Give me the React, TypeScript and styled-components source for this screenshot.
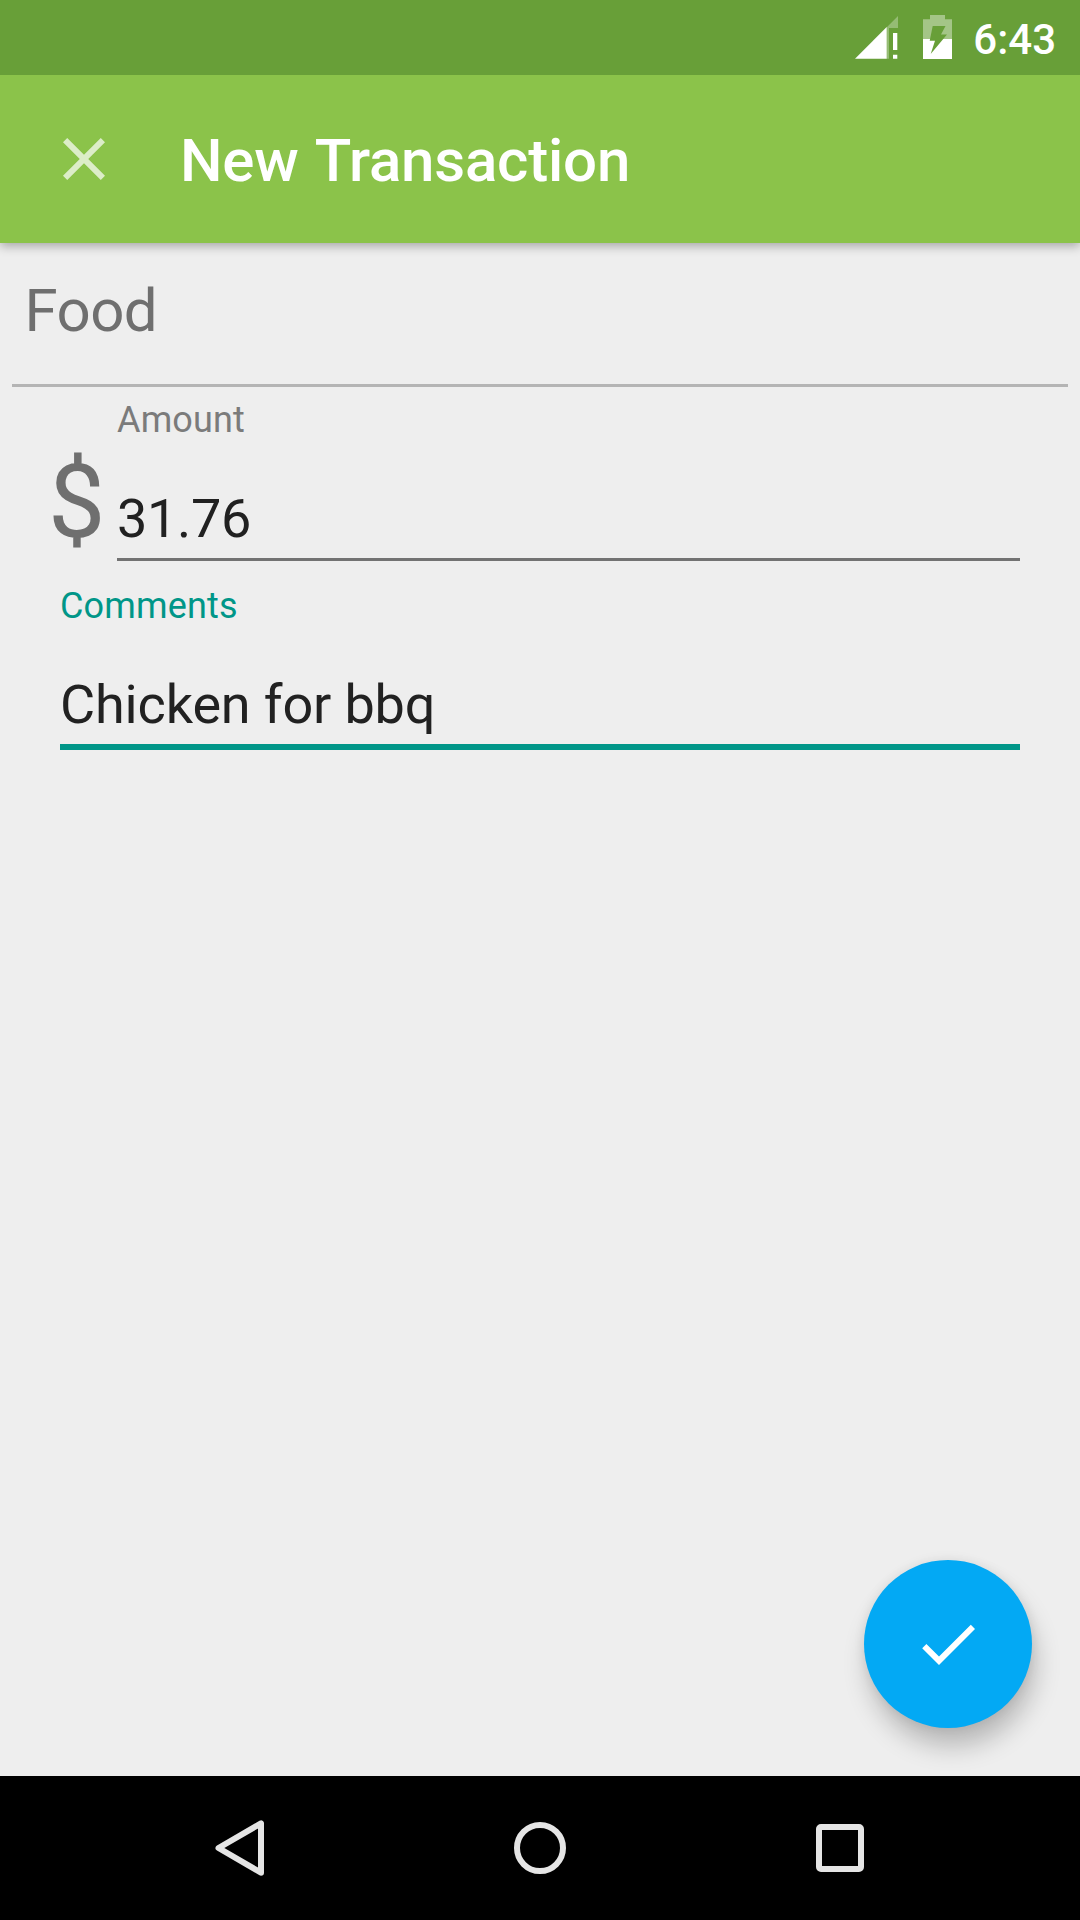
import React, { useState } from "react";
import styled, { createGlobalStyle } from "styled-components";

const GlobalStyle = createGlobalStyle`
  *, *::before, *::after { box-sizing: border-box; }
  body {
    margin: 0;
    background: #eeeeee;
    font-family: Roboto, "Noto Sans", sans-serif;
  }
`;

const Screen = styled.div`
  position: relative;
  display: flex;
  flex-direction: column;
  width: 1080px;
  height: 1920px;
  overflow: hidden;
  background: #eeeeee;
`;

const StatusBar = styled.div`
  position: relative;
  z-index: 1;
  display: flex;
  justify-content: flex-end;
  align-items: center;
  height: 75px;
  padding-right: 24px;
  background: #689f38;
`;

const SignalIcon = styled.svg`
  width: 44px;
  height: 44px;
  margin: 0 24px 1px 0;
`;

const BatteryIcon = styled.svg`
  width: 29px;
  height: 44px;
  margin: 0 21px 1px 0;
`;

const Clock = styled.span`
  padding-top: 4px;
  color: #ffffff;
  font-size: 42px;
  font-weight: 500;
  line-height: 50px;
`;

const AppBar = styled.header`
  position: relative;
  display: flex;
  align-items: center;
  height: 168px;
  padding-left: 48px;
  background: #8bc34a;
  box-shadow: 0 3px 10px rgba(0, 0, 0, 0.31);
`;

const CloseButton = styled.button`
  display: flex;
  width: 72px;
  height: 72px;
  margin-right: 60px;
  padding: 0;
  border: 0;
  background: none;
`;

const Title = styled.h1`
  margin: 0;
  padding-top: 4px;
  color: #ffffff;
  font-size: 60px;
  font-weight: 500;
  line-height: 70px;
  letter-spacing: -0.2px;
  word-spacing: 2.7px;
`;

const Form = styled.main`
  flex: 1;
  display: flex;
  flex-direction: column;
`;

const Category = styled.div`
  height: 144px;
  margin: 0 12px;
  padding: 32px 12.5px 0;
  border-bottom: 3px solid #b4b4b4;
  color: #6f6f6f;
  font-size: 60px;
  line-height: 71px;
  letter-spacing: -0.55px;
`;

const AmountRow = styled.div`
  display: flex;
  padding: 0 60px 0 48px;
`;

const Currency = styled.span`
  width: 69px;
  padding-top: 55px;
  color: #6f6f6f;
  font-size: 102px;
  line-height: 120px;
`;

const Field = styled.label<{ $focused?: boolean }>`
  flex: 1;
  display: flex;
  flex-direction: column;
  height: 174px;
  padding-top: 12px;
  border-bottom: ${(p) => (p.$focused ? "6px solid #009688" : "3px solid #727272")};
`;

const Comments = styled.div`
  display: flex;
  padding: 0 60px;

  ${Field} {
    height: 188px;
    padding-top: 23px;
  }
`;

const FieldLabel = styled.span<{ $focused?: boolean }>`
  color: ${(p) => (p.$focused ? "#009688" : "#7b7b7b")};
  font-size: 36px;
  line-height: 42px;
  letter-spacing: 0.15px;
`;

const FieldInput = styled.input<{ $tracking: number }>`
  width: 100%;
  height: 64px;
  margin-top: 46px;
  padding: 0;
  border: 0;
  outline: 0;
  background: none;
  color: #212121;
  font-family: inherit;
  font-size: 54px;
  line-height: 64px;
  letter-spacing: ${(p) => p.$tracking}px;
`;

const Fab = styled.button`
  position: absolute;
  right: 48px;
  bottom: 192px;
  display: flex;
  align-items: center;
  justify-content: center;
  width: 168px;
  height: 168px;
  padding: 0;
  border: 0;
  border-radius: 50%;
  background: #03a9f4;
  box-shadow: 4px 19px 26px -1px rgba(0, 0, 0, 0.23), 0 0 12px rgba(0, 0, 0, 0.08);
`;

const NavBar = styled.nav`
  position: relative;
  display: flex;
  justify-content: center;
  align-items: center;
  gap: 200px;
  height: 144px;
  background: #000000;
`;

const NavIcon = styled.svg`
  width: 100px;
  height: 100px;
`;

export default function App() {
  const [amount, setAmount] = useState("31.76");
  const [comments, setComments] = useState("Chicken for bbq");

  return (
    <>
      <GlobalStyle />
      <Screen>
        <StatusBar>
          <SignalIcon viewBox="0 0 44 44">
            <path d="M43 1V13H34V43.8H31.5V12.5Z" fill="#fff" fillOpacity="0.3" />
            <path d="M0 43.8L31.7 12V43.8Z" fill="#fff" />
            <path d="M38 18h4.3v17h-4.3zM38 39.7h4.3v4.1h-4.3z" fill="#fff" />
          </SignalIcon>
          <BatteryIcon viewBox="0 0 29 44">
            <path d="M7 0h15v4.3h7V24H0V4.3h7z" fill="#fff" fillOpacity="0.4" />
            <path d="M0 24h29v20H0z" fill="#fff" />
            <path d="M9.7 11H22.5L18 19.5H24L7.7 39L12 25.7H6.7Z" fill="#689f38" />
          </BatteryIcon>
          <Clock>6:43</Clock>
        </StatusBar>
        <AppBar>
          <CloseButton aria-label="Close">
            <svg width="72" height="72" viewBox="0 0 24 24" fill="#dcedc8">
              <path d="M19 6.41L17.59 5 12 10.59 6.41 5 5 6.41 10.59 12 5 17.59 6.41 19 12 13.41 17.59 19 19 17.59 13.41 12z" />
            </svg>
          </CloseButton>
          <Title>New Transaction</Title>
        </AppBar>
        <Form>
          <Category>Food</Category>
          <AmountRow>
            <Currency>$</Currency>
            <Field>
              <FieldLabel>Amount</FieldLabel>
              <FieldInput $tracking={-0.3} value={amount} onChange={(e) => setAmount(e.target.value)} />
            </Field>
          </AmountRow>
          <Comments>
            <Field $focused>
              <FieldLabel $focused>Comments</FieldLabel>
              <FieldInput $tracking={-0.15} value={comments} onChange={(e) => setComments(e.target.value)} />
            </Field>
          </Comments>
        </Form>
        <NavBar>
          <NavIcon viewBox="0 0 100 100" fill="none" stroke="#e5e5e5" strokeWidth="6" strokeLinejoin="round">
            <path d="M71 25.3V74.7L28.5 50Z" />
          </NavIcon>
          <NavIcon viewBox="0 0 100 100" fill="none" stroke="#e5e5e5" strokeWidth="6">
            <circle cx="50" cy="50" r="23" />
          </NavIcon>
          <NavIcon viewBox="0 0 100 100" fill="none" stroke="#e5e5e5" strokeWidth="6">
            <rect x="29" y="29" width="42" height="42" rx="2" />
          </NavIcon>
        </NavBar>
        <Fab aria-label="Save">
          <svg width="72" height="72" viewBox="0 0 24 24" fill="#fff">
            <path d="M9 16.2L4.8 12l-1.4 1.4L9 19 21 7l-1.4-1.4L9 16.2z" />
          </svg>
        </Fab>
      </Screen>
    </>
  );
}
